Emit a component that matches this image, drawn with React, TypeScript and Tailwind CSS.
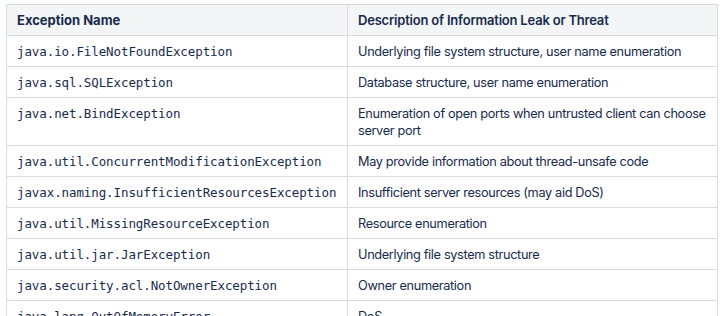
const rows: { name: string; desc: string }[] = [
  { name: "java.io.FileNotFoundException", desc: "Underlying file system structure, user name enumeration" },
  { name: "java.sql.SQLException", desc: "Database structure, user name enumeration" },
  { name: "java.net.BindException", desc: "Enumeration of open ports when untrusted client can choose server port" },
  { name: "java.util.ConcurrentModificationException", desc: "May provide information about thread-unsafe code" },
  { name: "javax.naming.InsufficientResourcesException", desc: "Insufficient server resources (may aid DoS)" },
  { name: "java.util.MissingResourceException", desc: "Resource enumeration" },
  { name: "java.util.jar.JarException", desc: "Underlying file system structure" },
  { name: "java.security.acl.NotOwnerException", desc: "Owner enumeration" },
  { name: "java.lang.OutOfMemoryError", desc: "DoS" },
];

export default function App() {
  return (
    <div className="bg-white pl-[6px] pt-[4px] font-['Inter',sans-serif] text-[#172b4d]">
      <table className="w-[712px] border-collapse table-fixed">
        <colgroup>
          <col className="w-[341px]" />
          <col />
        </colgroup>
        <thead>
          <tr className="bg-[#f4f5f7]">
            <th className="border border-[#d9dce2] px-[10px] py-[6.5px] text-left align-top text-[13px] leading-[17px] font-bold">
              Exception Name
            </th>
            <th className="border border-[#d9dce2] pl-[10px] pr-[4px] py-[6.5px] text-left align-top text-[13px] tracking-[-0.2px] leading-[17px] font-semibold">
              Description of Information Leak or Threat
            </th>
          </tr>
        </thead>
        <tbody>
          {rows.map((r) => (
            <tr key={r.name}>
              <td className="border border-[#d9dce2] px-[10px] py-[6.5px] align-top font-['DejaVu_Sans_Mono',monospace] text-[12.5px] tracking-[-0.1px] leading-[17px]">
                {r.name}
              </td>
              <td className="border border-[#d9dce2] pl-[10px] pr-[4px] py-[6.5px] align-top text-[12.75px] tracking-[-0.35px] leading-[17px]">
                {r.desc}
              </td>
            </tr>
          ))}
        </tbody>
      </table>
    </div>
  );
}
